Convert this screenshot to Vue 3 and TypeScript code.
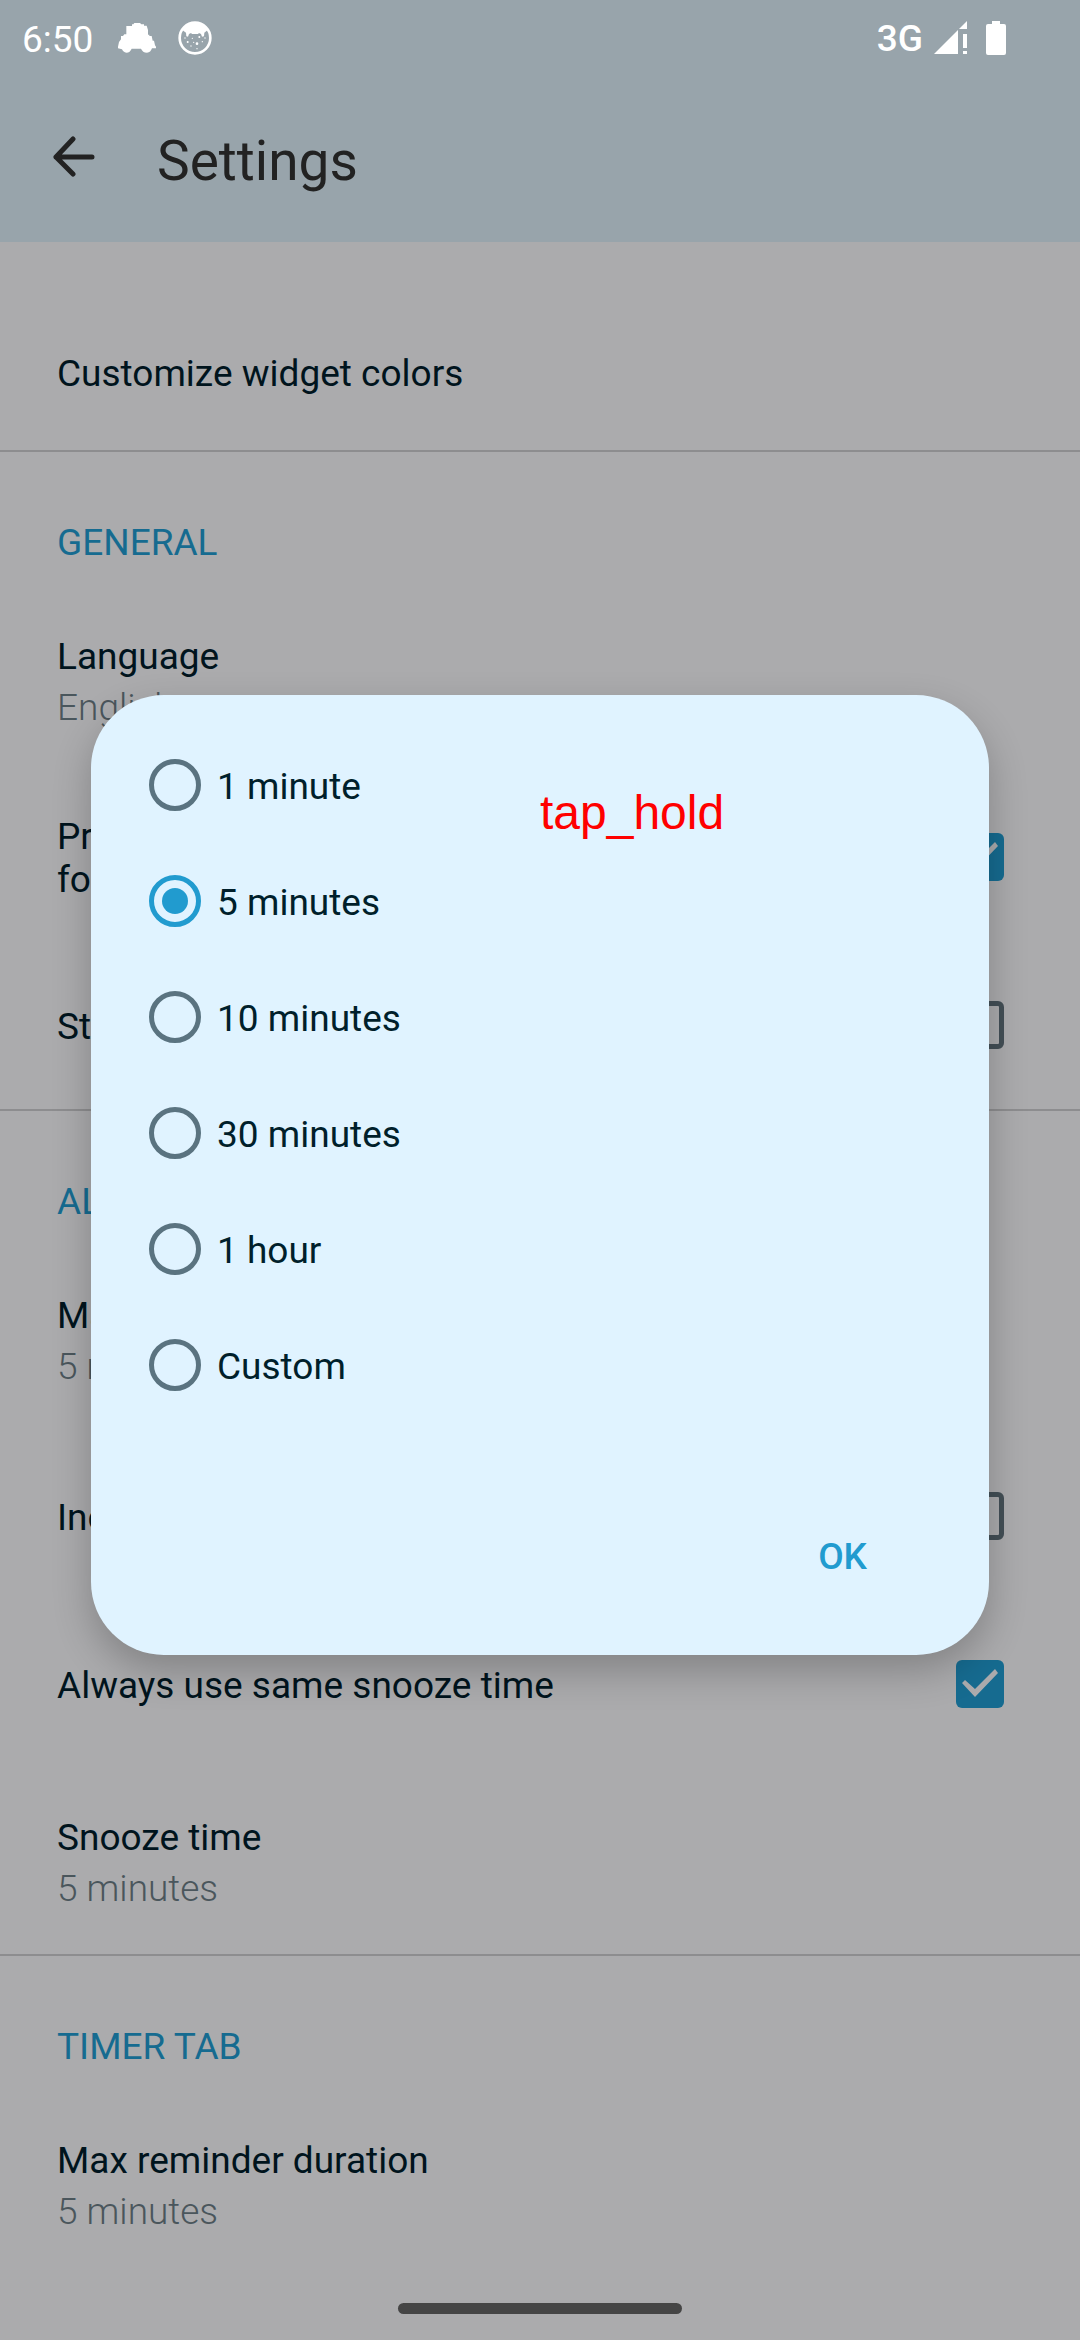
<script setup lang="ts">
import { ref } from 'vue'

interface Setting {
  id: string
  label: string[]
  value?: string
  checked?: boolean
}

interface Section {
  title: string
  items: Setting[]
}

const sections = ref<Section[]>([
  {
    title: 'GENERAL',
    items: [
      { id: 'language', label: ['Language'], value: 'English' },
      {
        id: 'prevent-sleep',
        label: ['Prevent phone from sleeping', 'foreground'],
        checked: true,
      },
      { id: 'sunday-first', label: ['Start week on Sunday'], checked: false },
    ],
  },
  {
    title: 'ALARM TAB',
    items: [
      { id: 'alarm-max', label: ['Max reminder duration'], value: '5 minutes' },
      { id: 'volume', label: ['Increase volume gradually'], checked: false },
      { id: 'same-snooze', label: ['Always use same snooze time'], checked: true },
      { id: 'snooze', label: ['Snooze time'], value: '5 minutes' },
    ],
  },
  {
    title: 'TIMER TAB',
    items: [{ id: 'timer-max', label: ['Max reminder duration'], value: '5 minutes' }],
  },
])

const durations = ['1 minute', '5 minutes', '10 minutes', '30 minutes', '1 hour', 'Custom']
const selected = ref('5 minutes')
</script>

<template>
  <div class="screen">
    <header class="top">
      <div class="status">
        <div class="status-group">
          <span class="clock">6:50</span>
          <svg class="car" viewBox="351 66 114 96" aria-hidden="true">
            <path
              d="M400 69h17l4 4h8v4h8l4 13v14h4v4h7l3 14h4l3 14 3 4v5h-12c-3 8-7 13-15 13-9 0-15-5-18-12h-28c-3 7-8 12-16 12-6 0-11-5-13-10l-12-3v-5l3-14 6-8v-10h6l4-5h6V78h17v-5h4z"
            />
          </svg>
          <svg class="cat" viewBox="531 63 102 102" aria-hidden="true">
            <circle cx="582" cy="114" r="46" class="ring" />
            <path d="M544 90c8-17 20-23 38-23s31 6 38 23l-10 8-1 11-6 1-3-8-6-3-3 3h-18l-3-3-6 3-3 8-5-1-1-11z" />
            <g class="dots">
              <circle cx="560" cy="126" r="3" />
              <circle cx="588" cy="131" r="4" />
              <circle cx="595" cy="111" r="3" />
              <circle cx="574" cy="115" r="2" />
              <circle cx="570" cy="138" r="2" />
              <circle cx="604" cy="125" r="2" />
              <circle cx="552" cy="114" r="2" />
              <circle cx="578" cy="127" r="2" />
              <circle cx="588" cy="146" r="2" />
              <circle cx="612" cy="114" r="2" />
            </g>
          </svg>
        </div>
        <div class="status-group">
          <span class="network">3G</span>
          <svg class="signal" viewBox="0 0 33 34" aria-hidden="true">
            <path d="M0 33 24 9v24zM25 8l8-8v8zM29 13h4v14h-4zM29 30h4v3h-4z" />
          </svg>
          <svg class="battery" viewBox="0 0 20 34" aria-hidden="true">
            <path d="M6 0h8v3h4a2 2 0 0 1 2 2v27a2 2 0 0 1-2 2H2a2 2 0 0 1-2-2V5a2 2 0 0 1 2-2h4z" />
          </svg>
        </div>
      </div>
      <div class="toolbar">
        <button class="back" type="button" aria-label="Back">
          <svg viewBox="0 0 42 42" aria-hidden="true">
            <path d="M20 3 3 21l17 17M3 21h36" />
          </svg>
        </button>
        <h1>Settings</h1>
      </div>
    </header>

    <main>
      <div class="widget-row">Customize widget colors</div>
      <section v-for="section in sections" :key="section.title">
        <h2>{{ section.title }}</h2>
        <template v-for="item in section.items" :key="item.id">
          <label v-if="item.checked !== undefined" class="check-row" :for="item.id">
            <span class="check-label">
              <span v-for="line in item.label" :key="line">{{ line }}</span>
            </span>
            <input :id="item.id" v-model="item.checked" type="checkbox" />
          </label>
          <div v-else class="value-row">
            <span>{{ item.label[0] }}</span>
            <span class="value">{{ item.value }}</span>
          </div>
        </template>
      </section>
    </main>

    <footer class="nav"><span class="pill"></span></footer>

    <div class="overlay">
      <form class="dialog" role="dialog" aria-label="Snooze time" @submit.prevent>
        <label v-for="duration in durations" :key="duration" class="option">
          <input v-model="selected" type="radio" name="duration" :value="duration" />
          <span>{{ duration }}</span>
        </label>
        <div class="actions">
          <button class="ok" type="submit">OK</button>
        </div>
        <span class="annotation">tap_hold</span>
      </form>
    </div>
  </div>
</template>

<style>
body {
  margin: 0;
  background: #ababad;
}
</style>

<style scoped>
.screen {
  position: relative;
  min-height: 100vh;
  display: flex;
  flex-direction: column;
  overflow: hidden;
  background: #ababad;
  color: #00141d;
  font-family: Roboto, sans-serif;
  font-size: 37px;
  line-height: 43px;
}

.top {
  background: #98a4ab;
}

.status {
  display: flex;
  justify-content: space-between;
  align-items: center;
  height: 76px;
  padding: 0 74px 0 22px;
  color: #fff;
}

.status-group {
  display: flex;
  align-items: center;
}

.status svg {
  fill: #fff;
}

.clock {
  padding-top: 2px;
}

.car {
  width: 38px;
  height: 32px;
  margin: 0 22px 0 25px;
}

.cat {
  width: 34px;
  height: 34px;
}

.cat .ring {
  fill: none;
  stroke: #fff;
  stroke-width: 8;
}

.network {
  font-weight: 500;
}

.signal {
  width: 33px;
  height: 34px;
  margin: 0 19px 0 11px;
}

.battery {
  width: 20px;
  height: 34px;
}

.toolbar {
  display: flex;
  align-items: center;
  height: 166px;
  padding: 0 53px 4px;
  box-sizing: border-box;
}

.back {
  display: flex;
  padding: 0;
  border: 0;
  background: none;
}

.back svg {
  width: 42px;
  height: 42px;
  fill: none;
  stroke: #222;
  stroke-width: 5;
  stroke-linecap: round;
  stroke-linejoin: round;
}

h1 {
  margin: 0 0 0 62px;
  padding-top: 8px;
  color: #222;
  font-size: 55px;
  font-weight: 400;
  line-height: 64px;
}

main {
  flex: 1;
}

.widget-row {
  padding: 110px 57px 55px;
}

section {
  border-top: 2px solid #8d8d8f;
}

h2 {
  margin: 0;
  padding: 69px 57px 23px;
  color: #166b90;
  font-size: 37px;
  font-weight: 400;
  line-height: 43px;
}

.value-row {
  display: flex;
  flex-direction: column;
  gap: 8px;
  padding: 48px 57px 44px;
}

.value {
  color: #4a565c;
  font-weight: 300;
}

.check-row {
  display: flex;
  align-items: center;
  justify-content: space-between;
  height: 168px;
  padding: 0 76px 0 57px;
}

.check-label {
  display: flex;
  flex-direction: column;
  padding-top: 2px;
}

input {
  appearance: none;
  flex: none;
  box-sizing: border-box;
  margin: 0;
}

.check-row input {
  width: 48px;
  height: 48px;
  border: 5px solid #434f56;
  border-radius: 6px;
}

.check-row input:checked {
  border: 0;
  background: #166b90;
}

.check-row input:checked::before {
  content: '';
  display: block;
  width: 48px;
  height: 48px;
  background: #ababad;
  clip-path: polygon(6px 23px, 9px 20px, 19px 29px, 39px 9px, 42px 13px, 19px 37px);
}

.nav {
  display: flex;
  justify-content: center;
  padding: 26px 0;
}

.pill {
  width: 284px;
  height: 11px;
  border-radius: 6px;
  background: #454545;
}

.overlay {
  position: absolute;
  inset: 0;
  display: flex;
  align-items: center;
  padding: 10px 91px 0;
}

.dialog {
  position: relative;
  flex: 1;
  padding: 32px 58px 36px;
  border-radius: 73px;
  background: #e0f3ff;
  color: #001f2b;
  box-shadow: 0 16px 38px rgba(0, 0, 0, 0.23);
}

.option {
  display: flex;
  align-items: center;
  gap: 16px;
  height: 116px;
}

.option span {
  padding-top: 2px;
}

.option input {
  width: 52px;
  height: 52px;
  border: 5px solid #5a7380;
  border-radius: 50%;
}

.option input:checked {
  display: grid;
  place-items: center;
  border-color: #219bcf;
}

.option input:checked::before {
  content: '';
  width: 26px;
  height: 26px;
  border-radius: 50%;
  background: #219bcf;
}

.actions {
  display: flex;
  justify-content: flex-end;
  padding-top: 70px;
}

.ok {
  height: 126px;
  padding: 0 64px;
  border: 0;
  background: none;
  color: #219bcf;
  font: inherit;
  font-weight: 500;
}

.annotation {
  position: absolute;
  top: 90px;
  left: 50%;
  color: #f00;
  font-family: 'Liberation Sans', sans-serif;
  font-size: 48px;
  line-height: 56px;
}
</style>
